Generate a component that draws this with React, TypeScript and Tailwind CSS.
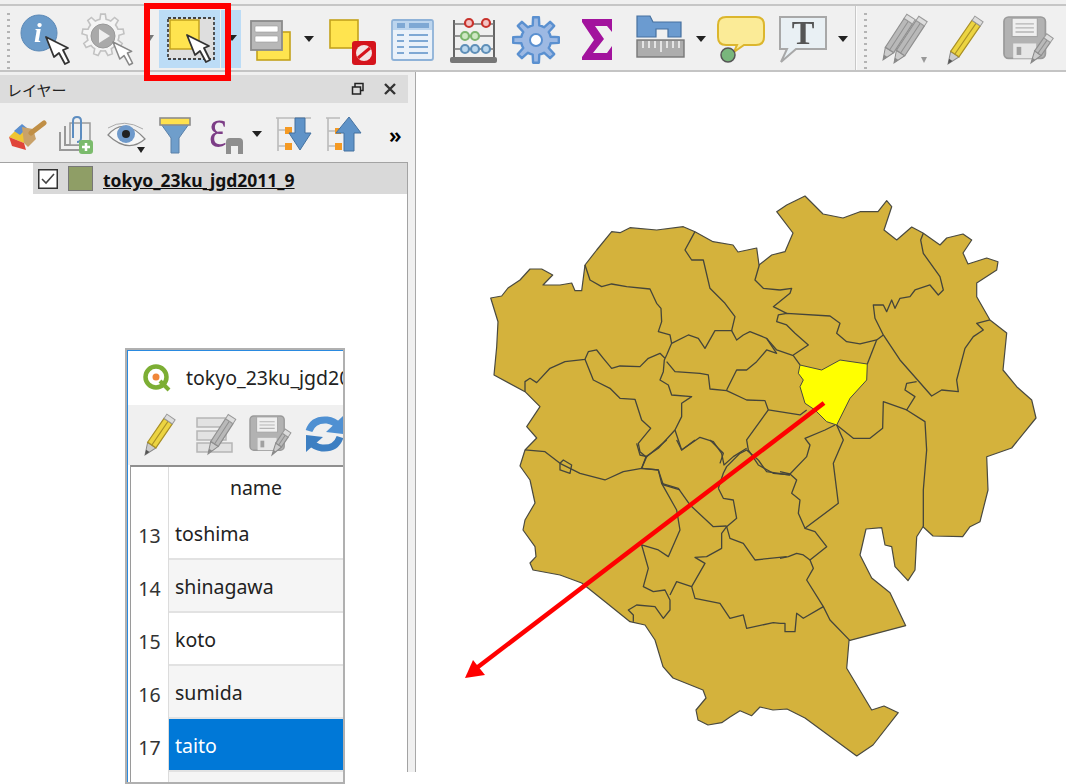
import { FC, ReactNode } from "react";

const outline =
  "490.7,298 501.7,296 508,288 520,280 530,269 541.7,269 552.7,275 543,285 560,285 571.7,283 575,290.7 581.7,290.7 585,265 596.7,250 611.7,231.7 620,232.7 630,227.7 656.7,230 683.3,226.7 695,231.7 713,241.7 733,245 738,252 756.7,248 759,265 771.7,255 785,251.7 793,233 776.7,211.7 786.7,205 805,196 823,214 843,218 860,211.7 878,211.7 886.7,200.7 891.7,206.7 884,230 896.7,240 911.7,227 923,233 940,245 946.7,238 963,234 971.7,240 963,253 968,264 986.7,258 998,261.7 996.7,270 976.7,283 976.7,296.7 990,320 1006.7,333 1003,370 1016.7,386.7 1031.7,400 1036,418 1011.7,448 986.7,456.7 988,490 980,521.7 970,526.7 962.7,536.7 933,536 923,526.7 916.7,536.7 915,570 908,580.7 895,566.7 891.7,546.7 885,545 881.7,527.7 866,529 860,555 871.7,578 890,592.7 905.7,625.7 849,640.7 846.7,668.3 871.7,710 884,706 898.3,712.7 873,745 856.7,756 805,718 787,709 773,710 760,707 751.7,715.7 740,710.7 730,717 721.7,722.7 708,725 698,720 696,710 706,698 703,690 693,686 673,678 663,666.7 655,640 645,625 630,621.7 606.7,603 581.7,583 560,575 533,570 530,563 536,556.7 535,546.7 523,530 525,520 535,503 530,480 520,466 525,450 536.7,438 526.7,426.7 540,406.7 525,391.7 494,375 496.7,346.7 498,321.7";

// district boundaries, each group in the coordinates of a 3x crop of the map
const lines4 = [
  "315,225 330,270 365,290 395,282 440,290 510,297 530,340 543,355 545,395 535,425 570,435 575,460",
  "645,125 615,180 635,210 670,210 690,295 735,340 765,380 755,422 705,422 675,475 655,445 625,435 575,460 560,495 553,510 550,545 540,570 565,585 575,615 635,620 605,640 605,680 585,720 535,775 498,800 485,835",
  "135,605 135,575 150,565 170,578 210,535 255,515 315,508 325,485 350,480 370,505 395,535 420,528 480,530 505,505 540,490 555,505",
  "315,508 340,570 390,595 420,625 465,628 485,690 512,715 475,760 480,785 498,800",
  "560,515 585,545 660,550 685,555 690,597 740,602 800,630 855,632 865,660 800,750 805,780 835,825 880,850 930,855",
  "740,600 770,540 800,540 830,515 860,480 890,490 860,445 810,425 790,435 770,450 755,422",
  "135,780 195,785 240,820 300,850 375,870 430,845 485,835 535,840 550,885 600,900",
  "240,820 250,810 275,825 270,850 240,840 240,820",
  "585,720 605,780 660,742 700,755 725,790 732,825 760,800 800,775",
  "838,225 825,270 850,295 900,300",
];

const lines5 = [
  "100,495 145,465 105,430 80,405 50,395 55,375 80,370 210,378 240,400 230,430 260,455 300,462 350,450 370,435",
  "20,445 50,480 100,497 120,525",
  "60,300 95,295 90,310 40,350 80,370",
  "370,435 345,385 340,345 370,345 380,365 395,330 405,355 420,325 450,320 465,300 510,285 535,315 550,300 540,260 490,190 482,150 490,130",
  "370,435 420,510 515,618 545,600 595,605 590,570 615,475 640,440 670,420 650,400 690,390",
  "470,575 440,580 435,600 465,620 440,660 370,635 368,715 330,745 280,745 230,705",
  "440,660 495,695 500,780 490,900",
  "230,705 250,750 220,820 230,900",
  "350,450 322,522",
  "25,660 120,675 140,660",
];

const lines7 = [
  "170,270 175,310 75,385 105,395 140,440 90,480 100,505 80,540 130,620 150,660 210,722",
  "130,620 70,655 50,640 45,695 15,695 15,670 0,670",
  "90,480 70,465 50,460 25,470 0,475",
  "75,385 55,340 60,300 35,280 50,240 30,222 0,215",
  "30,222 80,170 90,135 75,115 135,90 165,75",
  "430,270 430,380",
];

const lines6 = [
  "395,85 445,90 455,130 500,210 510,270 475,350 445,330 395,315 415,385 400,440 430,455 465,450 480,480 480,510 460,535 435,500 380,495 355,510 370,525 370,545",
  "480,465 500,425 545,440 555,475 630,490 660,535 700,525 710,565 790,548 810,550",
  "545,440 585,370 555,352 590,350 635,325 635,280 650,260 680,235 670,180 640,175 625,145",
  "455,130 505,145 540,195 610,260 650,258",
  "650,260 660,295 700,310 735,360 830,350",
  "625,145 640,100 650,80 690,40 710,30 745,60",
  "630,70 640,40 600,0",
  "380,10 390,45 410,50 395,85",
  "470,0 410,50",
  "500,0 515,30 555,0",
  "745,60 770,95 840,105",
];

const Lines: FC<{ x: number; y: number; data: string[] }> = ({ x, y, data }) => (
  <g transform={`translate(${x} ${y}) scale(0.3333)`}>
    {data.map((p) => (
      <polyline key={p} points={p} fill="none" stroke="#45453a" strokeWidth={1.3} strokeLinejoin="round" vectorEffect="non-scaling-stroke" />
    ))}
  </g>
);

const TokyoMap = () => (
  <svg width={650} height={712} viewBox="416 72 650 712" className="flex-none blur-[0.35px]">
    <polygon points={outline} fill="#d4b23c" stroke="#4a4a40" strokeWidth={1.2} strokeLinejoin="round" />
    <Lines x={480} y={190} data={lines4} />
    <Lines x={760} y={190} data={lines5} />
    <Lines x={780} y={400} data={lines7} />
    <Lines x={510} y={440} data={lines6} />
    <polygon
      points="800,365 821.7,370 840,360 867.3,364 866.7,380 850,398.3 836.7,425 826.7,421.7 815,410 805,403.3 800,386.7 803.3,380 798.3,373.3"
      fill="#ffff00"
      stroke="#4a4a40"
      strokeWidth={1}
    />
    <line x1={824} y1={403} x2={474} y2={670} stroke="#ff0000" strokeWidth={4.5} />
    <polygon points="465,678 473,660 485,675" fill="#ff0000" />
  </svg>
);

// svg whose viewBox is in page coordinates, so the shapes below read as screen positions
const Ico: FC<{ x0: number; x1: number; y0: number; y1: number; className?: string; children: ReactNode }> = ({
  x0,
  x1,
  y0,
  y1,
  className = "",
  children,
}) => (
  <svg width={x1 - x0} height={y1 - y0} viewBox={`${x0} ${y0} ${x1 - x0} ${y1 - y0}`} className={`flex-none blur-[0.4px] ${className}`}>
    {children}
  </svg>
);

const Cursor: FC<{ x: number; y: number; s?: number; stroke?: string }> = ({ x, y, s = 1, stroke = "#333" }) => (
  <polygon
    transform={`translate(${x} ${y}) scale(${s})`}
    points="0,0 8,20 13,16 19,27 23,25 17,13 22,11"
    fill="#fff"
    stroke={stroke}
    strokeWidth={1.8}
    strokeLinejoin="round"
  />
);

const Caret: FC<{ x: number; y: number; fill?: string; w?: number }> = ({ x, y, fill = "#222", w = 5 }) => (
  <polygon points={`${x - w},${y - 3} ${x + w},${y - 3} ${x},${y + 3}`} fill={fill} />
);

const gear = (cx: number, cy: number, ro: number, ri: number, n: number) => {
  const pts: string[] = [];
  for (let i = 0; i < n; i++) {
    const a = (i / n) * Math.PI * 2;
    const step = (Math.PI * 2) / n;
    [
      [ri, a - step * 0.5],
      [ri, a - step * 0.28],
      [ro, a - step * 0.16],
      [ro, a + step * 0.16],
      [ri, a + step * 0.28],
    ].forEach(([r, t]) => pts.push(`${(cx + r * Math.sin(t)).toFixed(1)},${(cy - r * Math.cos(t)).toFixed(1)}`));
  }
  return pts.join(" ");
};

const Pencil: FC<{ tip: [number, number]; end: [number, number]; w: number; body: string; edge: string; dark?: string }> = ({
  tip,
  end,
  w,
  body,
  edge,
  dark = "#555",
}) => {
  const len = Math.hypot(end[0] - tip[0], end[1] - tip[1]);
  const deg = (Math.atan2(end[1] - tip[1], end[0] - tip[0]) * 180) / Math.PI;
  return (
    <g transform={`translate(${tip[0]} ${tip[1]}) rotate(${deg})`}>
      <polygon points={`0,0 12,${-w / 2} 12,${w / 2}`} fill="#ccc" stroke="#888" strokeWidth={1} />
      <polygon points={`0,0 5,${-w / 5} 5,${w / 5}`} fill={dark} />
      <rect x={12} y={-w / 2} width={len - 17} height={w} fill={body} stroke={edge} strokeWidth={1.2} />
      <line x1={12} y1={0} x2={len - 5} y2={0} stroke={edge} strokeWidth={1} />
      <rect x={len - 5} y={-w / 2} width={5} height={w} fill="#ddd" stroke="#999" strokeWidth={1} />
    </g>
  );
};

const YellowPencil: FC<{ tip: [number, number]; end: [number, number] }> = ({ tip, end }) => (
  <Pencil tip={tip} end={end} w={10} body="#ecd441" edge="#a88f26" />
);
const GrayPencil: FC<{ tip: [number, number]; end: [number, number]; w?: number }> = ({ tip, end, w = 10 }) => (
  <Pencil tip={tip} end={end} w={w} body="#b9b9b9" edge="#8f8f8f" dark="#8a8a8a" />
);

const Floppy: FC<{ x: number; y: number; s: number }> = ({ x, y, s }) => (
  <g transform={`translate(${x} ${y}) scale(${s})`}>
    <rect x={0} y={0} width={36} height={36} rx={4} fill="#b2b2b2" stroke="#9a9a9a" strokeWidth={1.5} />
    <rect x={7} y={1} width={22} height={16} fill="#efefef" stroke="#a5a5a5" />
    <path d="M10 6 H26 M10 9.5 H26 M10 13 H26" stroke="#b5b5b5" strokeWidth={1.2} />
    <rect x={8} y={23} width={20} height={13} fill="#e6e6e6" />
    <rect x={11} y={26} width={4} height={7} fill="#a0a0a0" />
  </g>
);

const Grip = () => (
  <div className="w-[16px] flex-none flex flex-col gap-[4px] pl-[7px] pt-[7px]">
    {[...Array(10)].map((_, i) => (
      <div key={i} className="h-[2px] w-[3px] bg-[#b4b4b4]" />
    ))}
  </div>
);

const TopToolbar = () => (
  <div className="flex h-[64px]">
    <Grip />
    <Ico x0={16} x1={78} y0={6} y1={70}>
      <circle cx={39} cy={33} r={18} fill="#6b9bc9" stroke="#5b88b5" strokeWidth={1} />
      <text x={38} y={42} fontFamily="Liberation Serif" fontStyle="italic" fontWeight="bold" fontSize={28} fill="#fff" textAnchor="middle">
        i
      </text>
      <Cursor x={46} y={37} />
    </Ico>
    <Ico x0={78} x1={142} y0={6} y1={70}>
      <polygon points={gear(103, 35, 21, 16, 9)} fill="#f4f4f4" stroke="#c2c2c2" strokeWidth={1.6} />
      <circle cx={103} cy={36} r={12} fill="#a9a9a9" stroke="#999" />
      <polygon points="99,29 99,43 110,36" fill="#eee" />
      <Cursor x={113} y={42} s={0.85} stroke="#888" />
    </Ico>
    <Ico x0={142} x1={159} y0={6} y1={70}>
      <Caret x={150} y={38} fill="#777" w={4} />
    </Ico>
    <div className="flex-none w-[61px] h-[58px] mt-[4px] bg-[#bcdcf6]">
      <Ico x0={159} x1={220} y0={10} y1={68}>
        <rect x={168} y={18} width={46} height={41} fill="#dedede" stroke="#444" strokeWidth={1.8} strokeDasharray="3 2" />
        <rect x={170} y={20} width={29} height={29} fill="#ffe44f" stroke="#c4a21c" strokeWidth={1.5} />
        <Cursor x={187} y={35} />
      </Ico>
    </div>
    <div className="flex-none w-[20px] h-[58px] mt-[4px] ml-px bg-[#bcdcf6]">
      <Ico x0={221} x1={241} y0={10} y1={68}>
        <Caret x={232} y={38} />
      </Ico>
    </div>
    <Ico x0={242} x1={298} y0={6} y1={70}>
      <rect x={258} y={32} width={33} height={28} fill="#ffe44f" stroke="#c4a21c" strokeWidth={1.6} />
      <rect x={252} y={21} width={31} height={29} fill="#b8b8b8" stroke="#8b8b8b" strokeWidth={1.8} />
      <rect x={256} y={26} width={23} height={6} rx={1} fill="#fff" stroke="#999" strokeWidth={0.6} />
      <rect x={256} y={36} width={23} height={6} rx={1} fill="#fff" stroke="#999" strokeWidth={0.6} />
    </Ico>
    <Ico x0={298} x1={322} y0={6} y1={70}>
      <Caret x={310} y={39} />
    </Ico>
    <Ico x0={322} x1={384} y0={6} y1={70}>
      <rect x={331} y={20} width={28} height={28} fill="#ffe44f" stroke="#c4a21c" strokeWidth={1.6} />
      <rect x={353} y={41} width={24} height={24} rx={3} fill="#d5141c" />
      <circle cx={365} cy={53} r={8} fill="#f3e4e4" />
      <line x1={359} y1={58} x2={371} y2={48} stroke="#d5141c" strokeWidth={3} />
    </Ico>
    <Ico x0={384} x1={444} y0={6} y1={70}>
      <rect x={393} y={20} width={41} height={40} rx={2} fill="#eaf1f9" stroke="#8eb2d8" strokeWidth={1.8} />
      <rect x={394} y={21} width={39} height={9} fill="#bcd5ee" />
      <rect x={398} y={23} width={8} height={5} fill="#7ea8d4" />
      <rect x={410} y={23} width={20} height={5} fill="#7ea8d4" />
      <path d="M398 35 H405 M410 35 H429 M398 41 H405 M410 41 H429 M398 47 H405 M410 47 H429 M398 53 H405 M410 53 H429" stroke="#7ea8d4" strokeWidth={2} />
    </Ico>
    <Ico x0={444} x1={506} y0={6} y1={70}>
      <path d="M455 20 V58 M495 20 V58" stroke="#666" strokeWidth={2} />
      <path d="M455 24 H495 M455 36 H495 M455 49 H495" stroke="#777" strokeWidth={1.6} />
      <rect x={451} y={57} width={47} height={6} rx={2} fill="#777" />
      {[470, 487].map((x) => (
        <circle key={x} cx={x} cy={23} r={4} fill="#f3c3c3" stroke="#c8322c" strokeWidth={2.2} />
      ))}
      {[466, 476].map((x) => (
        <circle key={x} cx={x} cy={36} r={4} fill="#cfe8c4" stroke="#7cb56e" strokeWidth={2.2} />
      ))}
      {[466, 476, 487].map((x) => (
        <circle key={x} cx={x} cy={49} r={4} fill="#bcd8ee" stroke="#5f8fb8" strokeWidth={2.2} />
      ))}
    </Ico>
    <Ico x0={506} x1={570} y0={6} y1={70}>
      <polygon points={gear(537, 40, 23, 15, 8)} fill="#9db9e3" stroke="#5a90d0" strokeWidth={2.4} strokeLinejoin="round" />
      <circle cx={537} cy={40} r={6} fill="#fff" stroke="#5a90d0" strokeWidth={2} />
    </Ico>
    <Ico x0={570} x1={628} y0={6} y1={70}>
      <path d="M583 19 H613 V32 L608 26 H596 L605 39 L594 53 H608 L613 46 V60 H583 V57 L595 40 L583 22Z" fill="#a2139d" />
    </Ico>
    <Ico x0={628} x1={694} y0={6} y1={70}>
      <path d="M638 16 H651 L654 22 H682 V37 H669 V29 H657 V37 H638Z" fill="#6b9bd0" stroke="#47719f" strokeWidth={1.2} />
      <rect x={638} y={40} width={47} height={17} fill="#adadad" stroke="#777" strokeWidth={1.4} />
      <path d="M644 41 V48 M650 41 V48 M656 41 V48 M662 41 V52 M668 41 V48 M674 41 V48 M680 41 V48" stroke="#f2f2f2" strokeWidth={1.6} />
    </Ico>
    <Ico x0={694} x1={710} y0={6} y1={70}>
      <Caret x={702} y={39} />
    </Ico>
    <Ico x0={710} x1={772} y0={6} y1={70}>
      <path
        d="M727 17 H757 Q765 17 765 25 V37 Q765 45 757 45 H745 L735 52 L738 45 H727 Q719 45 719 37 V25 Q719 17 727 17Z"
        fill="#fbeb97"
        stroke="#dcb62d"
        strokeWidth={2}
      />
      <circle cx={729} cy={55} r={7} fill="#79b67c" stroke="#555" strokeWidth={1.5} />
    </Ico>
    <Ico x0={772} x1={836} y0={6} y1={70}>
      <path d="M781 17 H827 V49 H797 L782 62 L788 49 H781Z" fill="#e9f0f4" stroke="#a8a8a8" strokeWidth={2} />
      <text x={804} y={44} fontFamily="Liberation Serif" fontWeight="bold" fontSize={34} fill="#555" textAnchor="middle">
        T
      </text>
    </Ico>
    <Ico x0={836} x1={856} y0={6} y1={70}>
      <Caret x={844} y={39} />
    </Ico>
    <div className="flex-none w-[2px] h-[64px] bg-[#fbfbfb] border-l border-[#c8c8c8]" />
    <Grip />
    <Ico x0={874} x1={936} y0={6} y1={70}>
      <GrayPencil tip={[884, 60]} end={[912, 17]} />
      <GrayPencil tip={[895, 63]} end={[924, 19]} />
      <Caret x={925} y={60} fill="#999" w={3} />
    </Ico>
    <Ico x0={936} x1={996} y0={6} y1={70}>
      <YellowPencil tip={[949, 64]} end={[980, 19]} />
    </Ico>
    <Ico x0={996} x1={1066} y0={6} y1={70}>
      <Floppy x={1005} y={17} s={1.15} />
      <GrayPencil tip={[1032, 63]} end={[1051, 36]} w={8} />
    </Ico>
  </div>
);

const LayerToolbar = () => (
  <div className="flex h-[57px]">
    <Ico x0={0} x1={52} y0={105} y1={162}>
      <polygon points="9,137 20,126 30,132 24,143" fill="#efc532" />
      <polygon points="9,137 24,143 26,150 12,146" fill="#e0453a" />
      <polygon points="14,131 22,124 27,128 20,135" fill="#5b8fd0" />
      <polygon points="22,127 33,129 36,139 28,147 24,143" fill="#c9a26a" />
      <line x1={31} y1={133} x2={44} y2={123} stroke="#c08f46" strokeWidth={5} strokeLinecap="round" />
    </Ico>
    <Ico x0={52} x1={100} y0={105} y1={162}>
      <path d="M60 132 V150 H84 M65 126 V145 H89 V124 H70" fill="none" stroke="#999" strokeWidth={2} />
      <rect x={70} y={123} width={20} height={22} fill="#efefef" stroke="#9a9a9a" strokeWidth={1.5} />
      <path d="M73 138 V121 Q73 117 77 117 Q81 117 81 121 V138 Q81 142 77 142" fill="none" stroke="#5d8dc0" strokeWidth={2} />
      <rect x={79} y={140} width={14} height={14} rx={3} fill="#7bbb6c" />
      <path d="M86 143 V151 M82 147 H90" stroke="#fff" strokeWidth={2.5} />
    </Ico>
    <Ico x0={100} x1={150} y0={105} y1={162}>
      <path d="M108 135 Q124 116 145 139 Q128 154 108 135Z" fill="#f6f6f6" stroke="#888" strokeWidth={1.2} />
      <path d="M108 128 Q124 118 143 129" fill="none" stroke="#aaa" strokeWidth={1} />
      <circle cx={126} cy={134} r={9} fill="#6f9acb" />
      <circle cx={126} cy={134} r={4} fill="#222" />
      <Caret x={141} y={150} w={4} />
    </Ico>
    <Ico x0={150} x1={200} y0={105} y1={162}>
      <polygon points="161,124 189,124 179,138 179,153 171,153 171,138" fill="#6f9ecb" stroke="#5a80a8" strokeWidth={1} />
      <rect x={160} y={118} width={30} height={7} fill="#ffe14d" stroke="#8d8d8d" strokeWidth={1.6} />
    </Ico>
    <Ico x0={200} x1={268} y0={90} y1={162} className="-mt-[15px]">
      <text transform="translate(209 146) scale(1 1.3)" fontFamily="Liberation Serif" fontSize={42} fill="#7c3d86">
        ε
      </text>
      <path d="M226 154 V142 Q226 138 230 138 H239 Q243 138 243 142 V154 H238 V146 H231 V154Z" fill="#8e8e8e" />
      <Caret x={257} y={134} />
    </Ico>
    <Ico x0={268} x1={318} y0={105} y1={162}>
      <path d="M276 118 H311 M278 118 V151 M278 130 H288 M278 146 H288" stroke="#bbb" strokeWidth={1.6} fill="none" />
      <rect x={285} y={127} width={7} height={7} fill="#f59a23" />
      <rect x={285} y={143} width={7} height={7} fill="#f59a23" />
      <polygon points="295,118 305,118 305,133 311,133 300,150 289,133 295,133" fill="#5f93c8" stroke="#44719f" strokeWidth={1} />
    </Ico>
    <Ico x0={318} x1={368} y0={105} y1={162}>
      <path d="M326 118 H340 M328 118 V151 M328 131 H336 M328 146 H336" stroke="#bbb" strokeWidth={1.6} fill="none" />
      <rect x={335} y={128} width={6} height={6} fill="#f59a23" />
      <rect x={335} y={143} width={7} height={7} fill="#f59a23" />
      <polygon points="349,117 361,133 354,133 354,151 344,151 344,133 336,133" fill="#5f93c8" stroke="#44719f" strokeWidth={1} />
    </Ico>
    <div className="flex-1 pl-[21px] pt-[15px] text-[22px] leading-[28px] font-semibold text-black">»</div>
  </div>
);

const rows = [
  { n: 13, name: "toshima", cls: "bg-white text-[#222]" },
  { n: 14, name: "shinagawa", cls: "bg-[#f5f5f5] text-[#222]" },
  { n: 15, name: "koto", cls: "bg-white text-[#222]" },
  { n: 16, name: "sumida", cls: "bg-[#f5f5f5] text-[#222]" },
  { n: 17, name: "taito", cls: "bg-[#0078d7] text-white" },
];

const AttributeWindow = () => (
  <div className="absolute left-[125px] top-[348px] w-[220px] h-[436px] border-2 border-[#b0b0b0] bg-white flex flex-col overflow-hidden">
    <div className="h-px bg-[#2a8ae0] flex-none" />
    <div className="flex-1 flex flex-col border-l border-[#2a8ae0] min-h-0">
      <div className="h-[54px] flex-none flex items-center pl-[14px]">
        <Ico x0={142} x1={172} y0={362} y1={392}>
          <circle cx={156} cy={376} r={10.5} fill="none" stroke="#7cae34" strokeWidth={4.5} />
          <circle cx={156} cy={376} r={3.5} fill="#f0873a" />
          <line x1={160} y1={380} x2={169} y2={389} stroke="#7cae34" strokeWidth={4} />
        </Ico>
        <span className="ml-[14px] text-[19.5px] whitespace-nowrap text-[#222] leading-none">tokyo_23ku_jgd2011_9</span>
      </div>
      <div className="h-[60px] flex-none bg-[#f0f0f0] flex">
        <Ico x0={128} x1={190} y0={405} y1={465}>
          <YellowPencil tip={[145, 455]} end={[171, 417]} />
        </Ico>
        <Ico x0={190} x1={245} y0={405} y1={465}>
          <path d="M197 418 H226 V427 H197Z M197 431 H226 V440 H197Z M197 443 H232 V452 H197Z" fill="#e2e2e2" stroke="#b5b5b5" strokeWidth={1.5} />
          <GrayPencil tip={[208, 454]} end={[232, 417]} w={9} />
        </Ico>
        <Ico x0={245} x1={300} y0={405} y1={465}>
          <Floppy x={250} y={416} s={0.95} />
          <GrayPencil tip={[272, 455]} end={[288, 431]} w={7} />
        </Ico>
        <Ico x0={300} x1={343} y0={405} y1={465}>
          <path d="M309 431 Q313 419 327 420 Q334 421 339 426" fill="none" stroke="#4f90d2" strokeWidth={7} />
          <polygon points="343,416 343,434 326,432" fill="#4f90d2" />
          <path d="M340 437 Q336 449 322 448 Q315 447 310 442" fill="none" stroke="#3d7fc2" strokeWidth={7} />
          <polygon points="306,452 306,435 323,437" fill="#3d7fc2" />
        </Ico>
      </div>
      <div className="flex-1 flex flex-col ml-[2px] border-l border-t-2 border-l-[#9a9a9a] border-t-[#8f8f8f] min-h-0">
        <div className="h-[40px] flex-none flex">
          <div className="w-[38px] flex-none border-r border-[#dcdcdc]" />
          <div className="flex-1 text-center text-[19.5px] leading-[42px] text-[#222]">name</div>
        </div>
        {rows.map((r) => (
          <div key={r.n} className="h-[53px] flex-none flex">
            <div className="w-[38px] flex-none border-r border-[#dcdcdc] text-[19.5px] leading-[57px] text-center text-[#333]">{r.n}</div>
            <div className={`flex-1 border-b-2 border-[#e2e2e2] pl-[6px] text-[19.5px] leading-[53px] ${r.cls}`}>{r.name}</div>
          </div>
        ))}
        <div className="flex-1 flex">
          <div className="w-[38px] flex-none border-r border-[#dcdcdc]" />
          <div className="flex-1 bg-[#f5f5f5]" />
        </div>
      </div>
    </div>
  </div>
);

export default function App() {
  return (
    <div className="relative w-[1066px] h-[784px] overflow-hidden bg-white font-['Noto_Sans','Noto_Sans_CJK_JP',sans-serif]">
      <div className="h-[72px] bg-[#f0f0f0] border-b-2 border-[#c4c4c4] flex flex-col">
        <div className="h-[4px] flex-none" />
        <div className="h-[2px] flex-none bg-[#c6c6c6]" />
        <TopToolbar />
      </div>
      <div className="flex">
        <div className="w-[416px] h-[700px] flex-none bg-[#f0f0f0] border-r border-[#a8a8a8] flex flex-col">
          <div className="w-[408px] h-[33px] flex-none pt-[3px]">
            <div className="h-[28px] bg-[#dcdcdc] flex items-center pl-[7px] pr-[11px]">
              <span className="pt-[3px] text-[15px] text-[#222] font-['Noto_Sans_CJK_JP',sans-serif]">レイヤー</span>
              <svg width={14} height={14} viewBox="0 0 14 14" className="ml-auto mr-[18px] blur-[0.3px]">
                <rect x={4} y={1.5} width={8} height={7} fill="none" stroke="#222" strokeWidth={1.5} />
                <rect x={1.5} y={5} width={8} height={7} fill="#dcdcdc" stroke="#222" strokeWidth={1.5} />
              </svg>
              <svg width={14} height={14} viewBox="0 0 14 14" className="blur-[0.3px]">
                <path d="M2 2 L12 12 M12 2 L2 12" stroke="#333" strokeWidth={2.4} />
              </svg>
            </div>
          </div>
          <div className="w-[408px] flex-none">
            <LayerToolbar />
          </div>
          <div className="w-[408px] flex-1 bg-white border-t border-r border-[#a3a3a3] min-h-0">
            <div className="ml-[33px] h-[31px] bg-[#d9d9d9] flex items-center">
              <svg width={20} height={20} viewBox="0 0 20 20" className="ml-[5px] flex-none">
                <rect x={0.75} y={0.75} width={18.5} height={18.5} fill="#fff" stroke="#333" strokeWidth={1.5} />
                <path d="M4 10 L8 14 L16 5" fill="none" stroke="#444" strokeWidth={1.6} />
              </svg>
              <div className="ml-[10px] w-[25px] h-[25px] flex-none bg-[#8f9e66] border border-[#777]" />
              <span className="ml-[10px] pt-[3px] text-[17.5px] font-bold underline text-[#111] whitespace-nowrap">tokyo_23ku_jgd2011_9</span>
            </div>
          </div>
        </div>
        <TokyoMap />
      </div>
      <div className="absolute left-[144px] top-[3px] w-[87px] h-[78px] border-[6px] border-[#ff0000]" />
      <AttributeWindow />
    </div>
  );
}
